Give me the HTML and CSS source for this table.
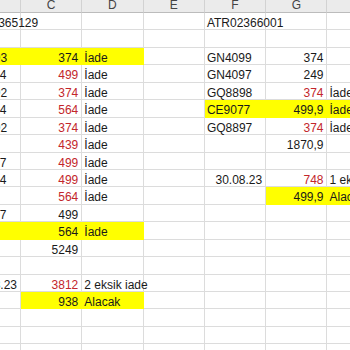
FILE: index.html
```html
<!DOCTYPE html>
<html lang="tr">
<head>
<meta charset="utf-8">
<title>Sheet</title>
<link rel="stylesheet" href="styles.css">
</head>
<body>
<div class="sheet">
  <div class="h">B</div><div class="h">C</div><div class="h">D</div><div class="h">E</div><div class="h">F</div><div class="h">G</div><div class="h">H</div>

  <div class="c">ATR02365129</div><div class="c"></div><div class="c"></div><div class="c"></div><div class="c">ATR02366001</div><div class="c"></div><div class="c"></div>
  <div class="c"></div><div class="c"></div><div class="c"></div><div class="c"></div><div class="c"></div><div class="c"></div><div class="c"></div>
  <div class="c y">GQ8893</div><div class="c n y">374</div><div class="c y">İade</div><div class="c"></div><div class="c">GN4099</div><div class="c n">374</div><div class="c"></div>
  <div class="c">GN4094</div><div class="c n r">499</div><div class="c">İade</div><div class="c"></div><div class="c">GN4097</div><div class="c n">249</div><div class="c"></div>
  <div class="c">GQ8892</div><div class="c n r">374</div><div class="c">İade</div><div class="c"></div><div class="c">GQ8898</div><div class="c n r">374</div><div class="c">İade</div>
  <div class="c">GN4094</div><div class="c n r">564</div><div class="c">İade</div><div class="c"></div><div class="c y">CE9077</div><div class="c n y">499,9</div><div class="c y">İade</div>
  <div class="c">GQ8892</div><div class="c n r">374</div><div class="c">İade</div><div class="c"></div><div class="c">GQ8897</div><div class="c n r">374</div><div class="c">İade</div>
  <div class="c"></div><div class="c n r">439</div><div class="c">İade</div><div class="c"></div><div class="c"></div><div class="c n">1870,9</div><div class="c"></div>
  <div class="c">GN4097</div><div class="c n r">499</div><div class="c">İade</div><div class="c"></div><div class="c"></div><div class="c"></div><div class="c"></div>
  <div class="c">GN4094</div><div class="c n r">499</div><div class="c">İade</div><div class="c"></div><div class="c n">30.08.23</div><div class="c n r">748</div><div class="c">1 eksik iade</div>
  <div class="c"></div><div class="c n r">564</div><div class="c">İade</div><div class="c"></div><div class="c"></div><div class="c n y">499,9</div><div class="c y">Alacak</div>
  <div class="c">GN4097</div><div class="c n">499</div><div class="c"></div><div class="c"></div><div class="c"></div><div class="c"></div><div class="c"></div>
  <div class="c y"></div><div class="c n y">564</div><div class="c y">İade</div><div class="c"></div><div class="c"></div><div class="c"></div><div class="c"></div>
  <div class="c"></div><div class="c n">5249</div><div class="c"></div><div class="c"></div><div class="c"></div><div class="c"></div><div class="c"></div>
  <div class="c"></div><div class="c"></div><div class="c"></div><div class="c"></div><div class="c"></div><div class="c"></div><div class="c"></div>
  <div class="c n">30.08.23</div><div class="c n r">3812</div><div class="c">2 eksik iade</div><div class="c"></div><div class="c"></div><div class="c"></div><div class="c"></div>
  <div class="c"></div><div class="c n y">938</div><div class="c y">Alacak</div><div class="c"></div><div class="c"></div><div class="c"></div><div class="c"></div>
  <div class="c"></div><div class="c"></div><div class="c"></div><div class="c"></div><div class="c"></div><div class="c"></div><div class="c"></div>
  <div class="c"></div><div class="c"></div><div class="c"></div><div class="c"></div><div class="c"></div><div class="c"></div><div class="c"></div>
  <div class="c"></div><div class="c"></div><div class="c"></div><div class="c"></div><div class="c"></div><div class="c"></div><div class="c"></div>
</div>
</body>
</html>
```

FILE: styles.css
```css
html, body {
  margin: 0;
  padding: 0;
  background: #ffffff;
}
body {
  width: 350px;
  height: 350px;
  overflow: hidden;
  font-family: "Liberation Sans", Arial, sans-serif;
  font-size: 12px;
  color: #1a1a1a;
}
.sheet {
  display: grid;
  grid-template-columns: repeat(7, 61.3px);
  grid-template-rows: 13px repeat(20, 17.45px);
  margin-left: -40.3px;
}
.h {
  box-sizing: border-box;
  background: #ebebeb;
  border-right: 1px solid #d2d2d2;
  border-bottom: 1px solid #bcbcbc;
  text-align: center;
  color: #444444;
  line-height: 10.5px;
  overflow: hidden;
}
.c {
  box-sizing: border-box;
  border-right: 1px solid #dcdcdc;
  border-bottom: 1px solid #dcdcdc;
  padding: 3px 2px 0 2px;
  line-height: 14px;
  white-space: nowrap;
  overflow: visible;
}
.n {
  text-align: right;
  padding-right: 3px;
}
.r {
  color: #c3262b;
}
.y {
  background: #ffff00;
  border-color: #ffff00;
}
```
